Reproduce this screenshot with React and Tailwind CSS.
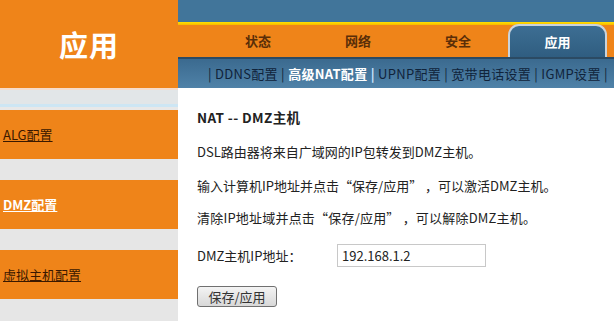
const font = { fontFamily: '"Noto Sans CJK SC", "Noto Sans", sans-serif' };

const tabs = ["状态", "网络", "安全"];

export default function App() {
    return (
        <div
            className="flex w-[614px] h-[321px] overflow-hidden bg-white text-[13px] text-[#222]"
            style={font}
        >
            {/* Left column */}
            <div className="flex flex-col w-[178px] shrink-0 bg-[#e6e6e6]">
                <div className="flex items-center justify-center h-[88px] bg-[#ef8419]">
                    <span className="text-[29px] font-bold text-white leading-none tracking-[1px]">应用</span>
                </div>
                <div className="h-[2px] bg-[#f6dccb]" />
                <div className="h-[14px] bg-[#e2e6e8]" />
                <div className="h-[3px] bg-[#cde6f4]" />
                <div className="h-[3px] bg-[#e8e8e8]" />

                <div className="flex items-center h-[49px] pl-[3px] bg-[#ef8419]">
                    <a className="underline text-[#3a1800] leading-none">ALG配置</a>
                </div>
                <div className="h-[21px]" />
                <div className="flex items-center h-[49px] pl-[3px] bg-[#ef8419]">
                    <a className="underline font-bold text-white leading-none">DMZ配置</a>
                </div>
                <div className="h-[21px]" />
                <div className="flex items-center h-[49px] pl-[3px] bg-[#ef8419]">
                    <a className="underline text-[#3a1800] leading-none">虚拟主机配置</a>
                </div>
            </div>

            {/* Right column */}
            <div className="flex flex-col flex-1">
                <div className="h-[22px] bg-[#41759a]" />
                <div className="h-[3px] bg-gradient-to-b from-[#ffe000] to-[#f8b800]" />

                {/* Tabs */}
                <div className="flex items-end h-[32px] pl-[30px] bg-[#ef8419]">
                    {tabs.map((t) => (
                        <div
                            key={t}
                            className="flex items-center justify-center w-[100px] h-full font-bold text-[#5a2e08]"
                        >
                            {t}
                        </div>
                    ))}
                    <div className="flex items-center justify-center w-[99px] h-[34px] -mb-px rounded-t-[11px] border-x-2 border-t-2 border-[#c9d3dc] bg-gradient-to-b from-[#3d6e93] to-[#2f5d80] font-bold text-white">
                        应用
                    </div>
                </div>

                {/* Sub nav */}
                <div className="flex items-center h-[31px] pl-[30px] border-t-2 border-[#2b4a63] bg-gradient-to-b from-[#3b6a8f] to-[#4f82a8] text-[#10233a] whitespace-nowrap tracking-[0.3px]">
                    <span>| DDNS配置 | </span>
                    <span className="font-bold text-white">&nbsp;高级NAT配置&nbsp;</span>
                    <span className="font-bold text-[#cfe6ff]">|</span>
                    <span>&nbsp;UPNP配置 | 宽带电话设置 | IGMP设置 |</span>
                </div>

                {/* Content */}
                <div className="flex flex-col pl-[19px] leading-[20px]">
                    <div className="mt-[19px] font-bold text-[13.5px] tracking-[0.4px]">NAT -- DMZ主机</div>
                    <div className="mt-[15px]">DSL路由器将来自广域网的IP包转发到DMZ主机。</div>
                    <div className="mt-[14px]">输入计算机IP地址并点击“保存/应用” ，可以激活DMZ主机。</div>
                    <div className="mt-[12px] tracking-[0.2px]">清除IP地址域并点击“保存/应用” ，可以解除DMZ主机。</div>
                    <div className="flex items-center mt-[16px] h-[23px]">
                        <span className="w-[140px]">DMZ主机IP地址：</span>
                        <input
                            className="w-[149px] h-[23px] px-[4px] border border-[#c8c8c8] outline-none text-[13px] text-[#222]"
                            style={font}
                            defaultValue="192.168.1.2"
                        />
                    </div>
                    <div className="mt-[19px]">
                        <button
                            className="w-[80px] h-[21px] rounded-[3px] border border-[#707070] bg-gradient-to-b from-[#f4f4f4] to-[#d8d8d8] text-[13px] leading-none text-[#333]"
                            style={font}
                        >
                            保存/应用
                        </button>
                    </div>
                </div>
            </div>
        </div>
    );
}
